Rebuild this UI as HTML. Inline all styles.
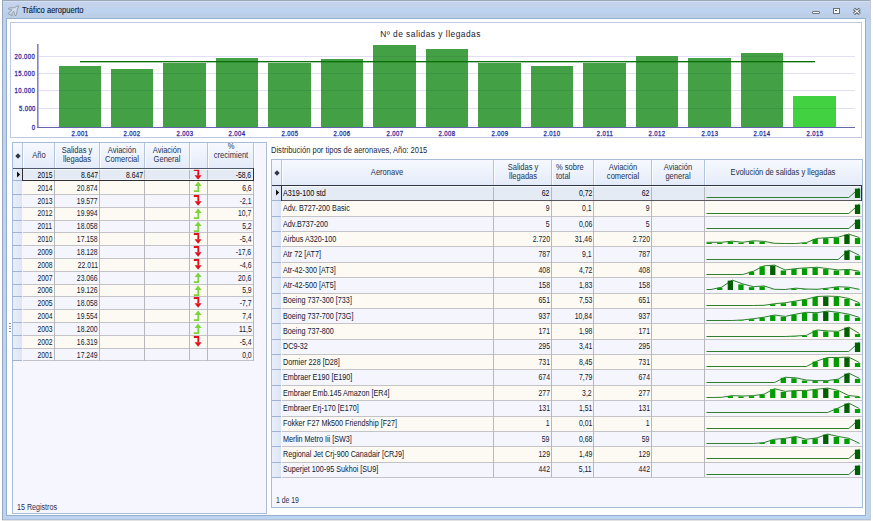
<!DOCTYPE html><html><head><meta charset="utf-8"><style>
*{margin:0;padding:0}
html,body{width:873px;height:521px;overflow:hidden;background:#fff;position:relative}
body{font-family:"Liberation Sans", sans-serif;}
.t{position:absolute;white-space:nowrap;line-height:1;font-family:"Liberation Sans", sans-serif;}
</style></head><body>
<div style="position:absolute;left:0px;top:0px;width:873px;height:521px;background:#fff;"></div>
<div style="position:absolute;left:2px;top:1px;width:868px;height:17px;background:linear-gradient(#cfe0f8 0px,#cfe0f8 1px,#c6d3ec 1px,#c5d2ec 6px,#bdd3ee 7px,#bcd2ee 12px,#bdcee7 13px,#bdcee7 17px);"></div>
<div style="position:absolute;left:3px;top:18px;width:3px;height:501px;background:#bcd4f0;"></div>
<div style="position:absolute;left:866px;top:18px;width:4px;height:501px;background:#bcd4f0;"></div>
<div style="position:absolute;left:3px;top:516px;width:867px;height:3px;background:#bcd4f0;"></div>
<div style="position:absolute;left:3px;top:519px;width:867px;height:1px;background:#b0c2da;"></div>
<div style="position:absolute;left:2px;top:0px;width:868px;height:1px;background:#9ea6b2;"></div>
<div style="position:absolute;left:2px;top:0px;width:1px;height:520px;background:#98a8bc;"></div>
<div style="position:absolute;left:870px;top:0px;width:1px;height:520px;background:#c8ccd2;"></div>
<div style="position:absolute;left:2px;top:520px;width:869px;height:1px;background:#e2e2e2;"></div>
<div style="position:absolute;left:6px;top:18px;width:860px;height:498px;background:#fff;box-sizing:border-box;border:1px solid #93aed0;"></div>
<div class="t" style="left:22.3px;transform-origin:0 0;top:6.18px;font-size:9px;color:#101830;font-weight:400;transform:scaleX(0.84);-webkit-text-stroke:0.12px #101830;">Tráfico aeropuerto</div>
<svg style="position:absolute;left:0;top:0" width="26" height="20" viewBox="0 0 26 20">
<path d="M18.9 5.9 L17.4 9.3 L16.2 15.4 L15.0 15.6 L13.9 11.4 L11.9 13.3 L12.1 15.7 L11.0 15.8 L10.2 14.3 L8.2 13.9 L8.3 13.0 L10.1 12.0 L12.1 10.0 L8.6 9.1 L8.6 8.0 L14.2 7.7 L16.9 6.1 Z" fill="#cfdcee" stroke="#90959b" stroke-width="0.85" stroke-linejoin="round"/>
</svg>
<div style="position:absolute;left:812px;top:11px;width:6px;height:1px;border:1px solid #6c7078;border-radius:1px;background:#fff"></div>
<div style="position:absolute;left:833px;top:8px;width:5px;height:4px;border:1px solid #6c7078;background:#fff;"></div>
<div style="position:absolute;left:835px;top:10px;width:2px;height:1px;background:#50545a"></div>
<svg style="position:absolute;left:852px;top:7px" width="10" height="9" viewBox="0 0 10 9">
<path d="M2 1.8 L7.8 6.8 M7.8 1.8 L2 6.8" stroke="#505458" stroke-width="2.9"/>
<path d="M2.3 2.1 L7.5 6.5 M7.5 2.1 L2.3 6.5" stroke="#fff" stroke-width="1.1"/>
</svg>
<div style="position:absolute;left:10px;top:22px;width:852px;height:116px;box-sizing:border-box;border:1px solid #c0c8e4;background:#fff;"></div>
<div class="t" style="left:130.5px;width:600px;text-align:center;transform-origin:50% 0;top:30.19px;font-size:8.4px;color:#161634;font-weight:400;transform:scaleX(1.0);letter-spacing:0.48px;">Nº de salidas y llegadas</div>
<div style="position:absolute;left:39px;top:108px;width:816px;height:1px;background:#e2def4;"></div>
<div style="position:absolute;left:39px;top:90px;width:816px;height:1px;background:#e2def4;"></div>
<div style="position:absolute;left:39px;top:73px;width:816px;height:1px;background:#e2def4;"></div>
<div style="position:absolute;left:39px;top:56px;width:816px;height:1px;background:#e2def4;"></div>
<div style="position:absolute;left:39px;top:125px;width:816px;height:1px;background:#f4f2fb;"></div>
<div class="t" style="right:837.4px;transform-origin:100% 0;top:123.57px;font-size:7px;color:#2a2a9c;font-weight:400;transform:scaleX(0.85);letter-spacing:0.45px;-webkit-text-stroke:0.28px #2a2a9c;">0</div>
<div class="t" style="right:837.4px;transform-origin:100% 0;top:105.27px;font-size:7px;color:#2a2a9c;font-weight:400;transform:scaleX(0.85);letter-spacing:0.45px;-webkit-text-stroke:0.28px #2a2a9c;">5.000</div>
<div class="t" style="right:837.4px;transform-origin:100% 0;top:87.27px;font-size:7px;color:#2a2a9c;font-weight:400;transform:scaleX(0.85);letter-spacing:0.45px;-webkit-text-stroke:0.28px #2a2a9c;">10.000</div>
<div class="t" style="right:837.4px;transform-origin:100% 0;top:70.17px;font-size:7px;color:#2a2a9c;font-weight:400;transform:scaleX(0.85);letter-spacing:0.45px;-webkit-text-stroke:0.28px #2a2a9c;">15.000</div>
<div class="t" style="right:837.4px;transform-origin:100% 0;top:53.07px;font-size:7px;color:#2a2a9c;font-weight:400;transform:scaleX(0.85);letter-spacing:0.45px;-webkit-text-stroke:0.28px #2a2a9c;">20.000</div>
<div style="position:absolute;left:58.50px;top:65.94px;width:42.3px;height:61.06px;background:#44a044;"></div>
<div class="t" style="left:-220.1px;width:600px;text-align:center;transform-origin:50% 0;top:129.97px;font-size:7px;color:#2a2a9c;font-weight:400;transform:scaleX(0.85);letter-spacing:0.45px;-webkit-text-stroke:0.28px #2a2a9c;">2.001</div>
<div style="position:absolute;left:110.99px;top:69.23px;width:42.3px;height:57.77px;background:#44a044;"></div>
<div class="t" style="left:-167.60999999999999px;width:600px;text-align:center;transform-origin:50% 0;top:129.97px;font-size:7px;color:#2a2a9c;font-weight:400;transform:scaleX(0.85);letter-spacing:0.45px;-webkit-text-stroke:0.28px #2a2a9c;">2.002</div>
<div style="position:absolute;left:163.48px;top:62.57px;width:42.3px;height:64.43px;background:#44a044;"></div>
<div class="t" style="left:-115.11999999999998px;width:600px;text-align:center;transform-origin:50% 0;top:129.97px;font-size:7px;color:#2a2a9c;font-weight:400;transform:scaleX(0.85);letter-spacing:0.45px;-webkit-text-stroke:0.28px #2a2a9c;">2.003</div>
<div style="position:absolute;left:215.97px;top:57.78px;width:42.3px;height:69.22px;background:#44a044;"></div>
<div class="t" style="left:-62.629999999999995px;width:600px;text-align:center;transform-origin:50% 0;top:129.97px;font-size:7px;color:#2a2a9c;font-weight:400;transform:scaleX(0.85);letter-spacing:0.45px;-webkit-text-stroke:0.28px #2a2a9c;">2.004</div>
<div style="position:absolute;left:268.46px;top:63.07px;width:42.3px;height:63.93px;background:#44a044;"></div>
<div class="t" style="left:-10.139999999999986px;width:600px;text-align:center;transform-origin:50% 0;top:129.97px;font-size:7px;color:#2a2a9c;font-weight:400;transform:scaleX(0.85);letter-spacing:0.45px;-webkit-text-stroke:0.28px #2a2a9c;">2.005</div>
<div style="position:absolute;left:320.95px;top:59.29px;width:42.3px;height:67.71px;background:#44a044;"></div>
<div class="t" style="left:42.349999999999966px;width:600px;text-align:center;transform-origin:50% 0;top:129.97px;font-size:7px;color:#2a2a9c;font-weight:400;transform:scaleX(0.85);letter-spacing:0.45px;-webkit-text-stroke:0.28px #2a2a9c;">2.006</div>
<div style="position:absolute;left:373.44px;top:45.35px;width:42.3px;height:81.65px;background:#44a044;"></div>
<div class="t" style="left:94.83999999999997px;width:600px;text-align:center;transform-origin:50% 0;top:129.97px;font-size:7px;color:#2a2a9c;font-weight:400;transform:scaleX(0.85);letter-spacing:0.45px;-webkit-text-stroke:0.28px #2a2a9c;">2.007</div>
<div style="position:absolute;left:425.93px;top:49.08px;width:42.3px;height:77.92px;background:#44a044;"></div>
<div class="t" style="left:147.32999999999998px;width:600px;text-align:center;transform-origin:50% 0;top:129.97px;font-size:7px;color:#2a2a9c;font-weight:400;transform:scaleX(0.85);letter-spacing:0.45px;-webkit-text-stroke:0.28px #2a2a9c;">2.008</div>
<div style="position:absolute;left:478.42px;top:62.83px;width:42.3px;height:64.17px;background:#44a044;"></div>
<div class="t" style="left:199.82px;width:600px;text-align:center;transform-origin:50% 0;top:129.97px;font-size:7px;color:#2a2a9c;font-weight:400;transform:scaleX(0.85);letter-spacing:0.45px;-webkit-text-stroke:0.28px #2a2a9c;">2.009</div>
<div style="position:absolute;left:530.91px;top:66.26px;width:42.3px;height:60.74px;background:#44a044;"></div>
<div class="t" style="left:252.31000000000006px;width:600px;text-align:center;transform-origin:50% 0;top:129.97px;font-size:7px;color:#2a2a9c;font-weight:400;transform:scaleX(0.85);letter-spacing:0.45px;-webkit-text-stroke:0.28px #2a2a9c;">2.010</div>
<div style="position:absolute;left:583.40px;top:63.07px;width:42.3px;height:63.93px;background:#44a044;"></div>
<div class="t" style="left:304.79999999999995px;width:600px;text-align:center;transform-origin:50% 0;top:129.97px;font-size:7px;color:#2a2a9c;font-weight:400;transform:scaleX(0.85);letter-spacing:0.45px;-webkit-text-stroke:0.28px #2a2a9c;">2.011</div>
<div style="position:absolute;left:635.89px;top:56.22px;width:42.3px;height:70.78px;background:#44a044;"></div>
<div class="t" style="left:357.28999999999996px;width:600px;text-align:center;transform-origin:50% 0;top:129.97px;font-size:7px;color:#2a2a9c;font-weight:400;transform:scaleX(0.85);letter-spacing:0.45px;-webkit-text-stroke:0.28px #2a2a9c;">2.012</div>
<div style="position:absolute;left:688.38px;top:57.70px;width:42.3px;height:69.30px;background:#44a044;"></div>
<div class="t" style="left:409.78px;width:600px;text-align:center;transform-origin:50% 0;top:129.97px;font-size:7px;color:#2a2a9c;font-weight:400;transform:scaleX(0.85);letter-spacing:0.45px;-webkit-text-stroke:0.28px #2a2a9c;">2.013</div>
<div style="position:absolute;left:740.87px;top:53.11px;width:42.3px;height:73.89px;background:#44a044;"></div>
<div class="t" style="left:462.27px;width:600px;text-align:center;transform-origin:50% 0;top:129.97px;font-size:7px;color:#2a2a9c;font-weight:400;transform:scaleX(0.85);letter-spacing:0.45px;-webkit-text-stroke:0.28px #2a2a9c;">2.014</div>
<div style="position:absolute;left:793.36px;top:96.39px;width:42.3px;height:30.61px;background:#41d141;"></div>
<div class="t" style="left:514.76px;width:600px;text-align:center;transform-origin:50% 0;top:129.97px;font-size:7px;color:#2a2a9c;font-weight:400;transform:scaleX(0.85);letter-spacing:0.45px;-webkit-text-stroke:0.28px #2a2a9c;">2.015</div>
<div style="position:absolute;left:58.5px;top:108px;width:42.3px;height:1px;background:rgba(0,30,40,0.09);"></div>
<div style="position:absolute;left:58.5px;top:90px;width:42.3px;height:1px;background:rgba(0,30,40,0.09);"></div>
<div style="position:absolute;left:58.5px;top:73px;width:42.3px;height:1px;background:rgba(0,30,40,0.09);"></div>
<div style="position:absolute;left:110.99px;top:108px;width:42.3px;height:1px;background:rgba(0,30,40,0.09);"></div>
<div style="position:absolute;left:110.99px;top:90px;width:42.3px;height:1px;background:rgba(0,30,40,0.09);"></div>
<div style="position:absolute;left:110.99px;top:73px;width:42.3px;height:1px;background:rgba(0,30,40,0.09);"></div>
<div style="position:absolute;left:163.48px;top:108px;width:42.3px;height:1px;background:rgba(0,30,40,0.09);"></div>
<div style="position:absolute;left:163.48px;top:90px;width:42.3px;height:1px;background:rgba(0,30,40,0.09);"></div>
<div style="position:absolute;left:163.48px;top:73px;width:42.3px;height:1px;background:rgba(0,30,40,0.09);"></div>
<div style="position:absolute;left:215.97px;top:108px;width:42.3px;height:1px;background:rgba(0,30,40,0.09);"></div>
<div style="position:absolute;left:215.97px;top:90px;width:42.3px;height:1px;background:rgba(0,30,40,0.09);"></div>
<div style="position:absolute;left:215.97px;top:73px;width:42.3px;height:1px;background:rgba(0,30,40,0.09);"></div>
<div style="position:absolute;left:268.46px;top:108px;width:42.3px;height:1px;background:rgba(0,30,40,0.09);"></div>
<div style="position:absolute;left:268.46px;top:90px;width:42.3px;height:1px;background:rgba(0,30,40,0.09);"></div>
<div style="position:absolute;left:268.46px;top:73px;width:42.3px;height:1px;background:rgba(0,30,40,0.09);"></div>
<div style="position:absolute;left:320.95px;top:108px;width:42.3px;height:1px;background:rgba(0,30,40,0.09);"></div>
<div style="position:absolute;left:320.95px;top:90px;width:42.3px;height:1px;background:rgba(0,30,40,0.09);"></div>
<div style="position:absolute;left:320.95px;top:73px;width:42.3px;height:1px;background:rgba(0,30,40,0.09);"></div>
<div style="position:absolute;left:373.44px;top:108px;width:42.3px;height:1px;background:rgba(0,30,40,0.09);"></div>
<div style="position:absolute;left:373.44px;top:90px;width:42.3px;height:1px;background:rgba(0,30,40,0.09);"></div>
<div style="position:absolute;left:373.44px;top:73px;width:42.3px;height:1px;background:rgba(0,30,40,0.09);"></div>
<div style="position:absolute;left:373.44px;top:56px;width:42.3px;height:1px;background:rgba(0,30,40,0.09);"></div>
<div style="position:absolute;left:425.93px;top:108px;width:42.3px;height:1px;background:rgba(0,30,40,0.09);"></div>
<div style="position:absolute;left:425.93px;top:90px;width:42.3px;height:1px;background:rgba(0,30,40,0.09);"></div>
<div style="position:absolute;left:425.93px;top:73px;width:42.3px;height:1px;background:rgba(0,30,40,0.09);"></div>
<div style="position:absolute;left:425.93px;top:56px;width:42.3px;height:1px;background:rgba(0,30,40,0.09);"></div>
<div style="position:absolute;left:478.42px;top:108px;width:42.3px;height:1px;background:rgba(0,30,40,0.09);"></div>
<div style="position:absolute;left:478.42px;top:90px;width:42.3px;height:1px;background:rgba(0,30,40,0.09);"></div>
<div style="position:absolute;left:478.42px;top:73px;width:42.3px;height:1px;background:rgba(0,30,40,0.09);"></div>
<div style="position:absolute;left:530.91px;top:108px;width:42.3px;height:1px;background:rgba(0,30,40,0.09);"></div>
<div style="position:absolute;left:530.91px;top:90px;width:42.3px;height:1px;background:rgba(0,30,40,0.09);"></div>
<div style="position:absolute;left:530.91px;top:73px;width:42.3px;height:1px;background:rgba(0,30,40,0.09);"></div>
<div style="position:absolute;left:583.4px;top:108px;width:42.3px;height:1px;background:rgba(0,30,40,0.09);"></div>
<div style="position:absolute;left:583.4px;top:90px;width:42.3px;height:1px;background:rgba(0,30,40,0.09);"></div>
<div style="position:absolute;left:583.4px;top:73px;width:42.3px;height:1px;background:rgba(0,30,40,0.09);"></div>
<div style="position:absolute;left:635.89px;top:108px;width:42.3px;height:1px;background:rgba(0,30,40,0.09);"></div>
<div style="position:absolute;left:635.89px;top:90px;width:42.3px;height:1px;background:rgba(0,30,40,0.09);"></div>
<div style="position:absolute;left:635.89px;top:73px;width:42.3px;height:1px;background:rgba(0,30,40,0.09);"></div>
<div style="position:absolute;left:688.38px;top:108px;width:42.3px;height:1px;background:rgba(0,30,40,0.09);"></div>
<div style="position:absolute;left:688.38px;top:90px;width:42.3px;height:1px;background:rgba(0,30,40,0.09);"></div>
<div style="position:absolute;left:688.38px;top:73px;width:42.3px;height:1px;background:rgba(0,30,40,0.09);"></div>
<div style="position:absolute;left:740.87px;top:108px;width:42.3px;height:1px;background:rgba(0,30,40,0.09);"></div>
<div style="position:absolute;left:740.87px;top:90px;width:42.3px;height:1px;background:rgba(0,30,40,0.09);"></div>
<div style="position:absolute;left:740.87px;top:73px;width:42.3px;height:1px;background:rgba(0,30,40,0.09);"></div>
<div style="position:absolute;left:740.87px;top:56px;width:42.3px;height:1px;background:rgba(0,30,40,0.09);"></div>
<div style="position:absolute;left:793.36px;top:108px;width:42.3px;height:1px;background:rgba(0,30,40,0.09);"></div>
<div style="position:absolute;left:79.5px;top:61px;width:735px;height:1px;background:#0a700a;"></div>
<div style="position:absolute;left:79.5px;top:62px;width:735px;height:1px;background:rgba(10,112,10,0.35);"></div>
<div style="position:absolute;left:37px;top:44px;width:1px;height:84px;background:#8484c4;"></div>
<div style="position:absolute;left:38px;top:44px;width:1px;height:84px;background:#b4b4dc;"></div>
<div style="position:absolute;left:37px;top:127px;width:818px;height:1px;background:#6464b0;"></div>
<div style="position:absolute;left:12px;top:142px;width:255px;height:372px;box-sizing:border-box;border:1px solid #a8bcd8;background:#f5f6fe;"></div>
<div style="position:absolute;left:13px;top:143px;width:241px;height:25px;background:linear-gradient(#f6f9fe,#e4ebf9);"></div>
<div style="position:absolute;left:22px;top:143px;width:1px;height:25px;background:#b4c4dc;"></div>
<div style="position:absolute;left:23px;top:143px;width:1px;height:25px;background:#fbfcff;"></div>
<div style="position:absolute;left:54px;top:143px;width:1px;height:25px;background:#b4c4dc;"></div>
<div style="position:absolute;left:55px;top:143px;width:1px;height:25px;background:#fbfcff;"></div>
<div style="position:absolute;left:99px;top:143px;width:1px;height:25px;background:#b4c4dc;"></div>
<div style="position:absolute;left:100px;top:143px;width:1px;height:25px;background:#fbfcff;"></div>
<div style="position:absolute;left:144px;top:143px;width:1px;height:25px;background:#b4c4dc;"></div>
<div style="position:absolute;left:145px;top:143px;width:1px;height:25px;background:#fbfcff;"></div>
<div style="position:absolute;left:189px;top:143px;width:1px;height:25px;background:#b4c4dc;"></div>
<div style="position:absolute;left:190px;top:143px;width:1px;height:25px;background:#fbfcff;"></div>
<div style="position:absolute;left:207px;top:143px;width:1px;height:25px;background:#b4c4dc;"></div>
<div style="position:absolute;left:208px;top:143px;width:1px;height:25px;background:#fbfcff;"></div>
<div style="position:absolute;left:253px;top:143px;width:1px;height:25px;background:#b4c4dc;"></div>
<div style="position:absolute;left:254px;top:143px;width:1px;height:25px;background:#fbfcff;"></div>
<svg width="6" height="6" style="position:absolute;left:14.5px;top:152.8px"><path d="M3 0.3 L5.7 3 L3 5.7 L0.3 3 Z" fill="#303848"/></svg>
<div class="t" style="left:-261.5px;width:600px;text-align:center;transform-origin:50% 0;top:151.19px;font-size:8.4px;color:#24304e;font-weight:400;transform:scaleX(0.9);">Año</div>
<div class="t" style="left:-223.0px;width:600px;text-align:center;transform-origin:50% 0;top:146.09px;font-size:8.4px;color:#24304e;font-weight:400;transform:scaleX(0.9);">Salidas y</div>
<div class="t" style="left:-223.0px;width:600px;text-align:center;transform-origin:50% 0;top:155.29px;font-size:8.4px;color:#24304e;font-weight:400;transform:scaleX(0.9);">llegadas</div>
<div class="t" style="left:-178.0px;width:600px;text-align:center;transform-origin:50% 0;top:146.09px;font-size:8.4px;color:#24304e;font-weight:400;transform:scaleX(0.9);">Aviación</div>
<div class="t" style="left:-178.0px;width:600px;text-align:center;transform-origin:50% 0;top:155.29px;font-size:8.4px;color:#24304e;font-weight:400;transform:scaleX(0.9);">Comercial</div>
<div class="t" style="left:-132.85px;width:600px;text-align:center;transform-origin:50% 0;top:146.09px;font-size:8.4px;color:#24304e;font-weight:400;transform:scaleX(0.9);">Aviación</div>
<div class="t" style="left:-132.85px;width:600px;text-align:center;transform-origin:50% 0;top:155.29px;font-size:8.4px;color:#24304e;font-weight:400;transform:scaleX(0.9);">General</div>
<div class="t" style="left:-69.5px;width:600px;text-align:center;transform-origin:50% 0;top:141.69px;font-size:8.4px;color:#24304e;font-weight:400;transform:scaleX(0.9);">%</div>
<div class="t" style="left:-69.5px;width:600px;text-align:center;transform-origin:50% 0;top:151.39px;font-size:8.4px;color:#24304e;font-weight:400;transform:scaleX(0.9);">crecimient</div>
<div style="position:absolute;left:23px;top:168px;width:231px;height:12px;background:#e4ebf4;"></div>
<div style="position:absolute;left:13px;top:168px;width:9px;height:12px;background:linear-gradient(90deg,#e9eefa,#dce5f5);"></div>
<div class="t" style="right:820.5px;transform-origin:100% 0;top:170.89px;font-size:8.4px;color:#06060c;font-weight:400;transform:scaleX(0.81);">2015</div>
<div class="t" style="right:775.5px;transform-origin:100% 0;top:170.89px;font-size:8.4px;color:#06060c;font-weight:400;transform:scaleX(0.81);">8.647</div>
<div class="t" style="right:730.5px;transform-origin:100% 0;top:170.89px;font-size:8.4px;color:#06060c;font-weight:400;transform:scaleX(0.81);">8.647</div>
<div class="t" style="right:621.5px;transform-origin:100% 0;top:170.89px;font-size:8.4px;color:#06060c;font-weight:400;transform:scaleX(0.81);">-58,6</div>
<svg width="9" height="12" viewBox="0 0 9 12" style="position:absolute;left:192.5px;top:168.5px"><path d="M0.8 1 H5.3 V6.5" fill="none" stroke="#e0101c" stroke-width="1.8"/><path d="M1.6 6.3 H8.6 L5.1 10.8 Z" fill="#e0101c"/></svg>
<div style="position:absolute;left:23px;top:180px;width:231px;height:14px;background:#fdfaf3;"></div>
<div style="position:absolute;left:13px;top:180px;width:9px;height:14px;background:linear-gradient(90deg,#e9eefa,#dce5f5);"></div>
<div class="t" style="right:820.5px;transform-origin:100% 0;top:183.73px;font-size:8.4px;color:#0e1834;font-weight:400;transform:scaleX(0.81);">2014</div>
<div class="t" style="right:775.5px;transform-origin:100% 0;top:183.73px;font-size:8.4px;color:#0e1834;font-weight:400;transform:scaleX(0.81);">20.874</div>
<div class="t" style="right:621.5px;transform-origin:100% 0;top:183.73px;font-size:8.4px;color:#0e1834;font-weight:400;transform:scaleX(0.81);">6,6</div>
<svg width="9" height="12" viewBox="0 0 9 12" style="position:absolute;left:192.5px;top:180.5px"><path d="M0.8 10.2 H5.3 V4.5" fill="none" stroke="#7cd43c" stroke-width="1.8"/><path d="M1.6 4.9 H8.6 L5.1 0.6 Z" fill="#7cd43c"/></svg>
<div style="position:absolute;left:23px;top:194px;width:231px;height:13px;background:#f4f5fd;"></div>
<div style="position:absolute;left:13px;top:194px;width:9px;height:13px;background:linear-gradient(90deg,#e9eefa,#dce5f5);"></div>
<div class="t" style="right:820.5px;transform-origin:100% 0;top:196.57px;font-size:8.4px;color:#0e1834;font-weight:400;transform:scaleX(0.81);">2013</div>
<div class="t" style="right:775.5px;transform-origin:100% 0;top:196.57px;font-size:8.4px;color:#0e1834;font-weight:400;transform:scaleX(0.81);">19.577</div>
<div class="t" style="right:621.5px;transform-origin:100% 0;top:196.57px;font-size:8.4px;color:#0e1834;font-weight:400;transform:scaleX(0.81);">-2,1</div>
<svg width="9" height="12" viewBox="0 0 9 12" style="position:absolute;left:192.5px;top:194.5px"><path d="M0.8 1 H5.3 V6.5" fill="none" stroke="#e0101c" stroke-width="1.8"/><path d="M1.6 6.3 H8.6 L5.1 10.8 Z" fill="#e0101c"/></svg>
<div style="position:absolute;left:23px;top:207px;width:231px;height:13px;background:#fdfaf3;"></div>
<div style="position:absolute;left:13px;top:207px;width:9px;height:13px;background:linear-gradient(90deg,#e9eefa,#dce5f5);"></div>
<div class="t" style="right:820.5px;transform-origin:100% 0;top:209.41px;font-size:8.4px;color:#0e1834;font-weight:400;transform:scaleX(0.81);">2012</div>
<div class="t" style="right:775.5px;transform-origin:100% 0;top:209.41px;font-size:8.4px;color:#0e1834;font-weight:400;transform:scaleX(0.81);">19.994</div>
<div class="t" style="right:621.5px;transform-origin:100% 0;top:209.41px;font-size:8.4px;color:#0e1834;font-weight:400;transform:scaleX(0.81);">10,7</div>
<svg width="9" height="12" viewBox="0 0 9 12" style="position:absolute;left:192.5px;top:207.5px"><path d="M0.8 10.2 H5.3 V4.5" fill="none" stroke="#7cd43c" stroke-width="1.8"/><path d="M1.6 4.9 H8.6 L5.1 0.6 Z" fill="#7cd43c"/></svg>
<div style="position:absolute;left:23px;top:220px;width:231px;height:12px;background:#f4f5fd;"></div>
<div style="position:absolute;left:13px;top:220px;width:9px;height:12px;background:linear-gradient(90deg,#e9eefa,#dce5f5);"></div>
<div class="t" style="right:820.5px;transform-origin:100% 0;top:222.25px;font-size:8.4px;color:#0e1834;font-weight:400;transform:scaleX(0.81);">2011</div>
<div class="t" style="right:775.5px;transform-origin:100% 0;top:222.25px;font-size:8.4px;color:#0e1834;font-weight:400;transform:scaleX(0.81);">18.058</div>
<div class="t" style="right:621.5px;transform-origin:100% 0;top:222.25px;font-size:8.4px;color:#0e1834;font-weight:400;transform:scaleX(0.81);">5,2</div>
<svg width="9" height="12" viewBox="0 0 9 12" style="position:absolute;left:192.5px;top:220.5px"><path d="M0.8 10.2 H5.3 V4.5" fill="none" stroke="#7cd43c" stroke-width="1.8"/><path d="M1.6 4.9 H8.6 L5.1 0.6 Z" fill="#7cd43c"/></svg>
<div style="position:absolute;left:23px;top:232px;width:231px;height:13px;background:#fdfaf3;"></div>
<div style="position:absolute;left:13px;top:232px;width:9px;height:13px;background:linear-gradient(90deg,#e9eefa,#dce5f5);"></div>
<div class="t" style="right:820.5px;transform-origin:100% 0;top:235.09px;font-size:8.4px;color:#0e1834;font-weight:400;transform:scaleX(0.81);">2010</div>
<div class="t" style="right:775.5px;transform-origin:100% 0;top:235.09px;font-size:8.4px;color:#0e1834;font-weight:400;transform:scaleX(0.81);">17.158</div>
<div class="t" style="right:621.5px;transform-origin:100% 0;top:235.09px;font-size:8.4px;color:#0e1834;font-weight:400;transform:scaleX(0.81);">-5,4</div>
<svg width="9" height="12" viewBox="0 0 9 12" style="position:absolute;left:192.5px;top:232.5px"><path d="M0.8 1 H5.3 V6.5" fill="none" stroke="#e0101c" stroke-width="1.8"/><path d="M1.6 6.3 H8.6 L5.1 10.8 Z" fill="#e0101c"/></svg>
<div style="position:absolute;left:23px;top:245px;width:231px;height:13px;background:#f4f5fd;"></div>
<div style="position:absolute;left:13px;top:245px;width:9px;height:13px;background:linear-gradient(90deg,#e9eefa,#dce5f5);"></div>
<div class="t" style="right:820.5px;transform-origin:100% 0;top:247.93px;font-size:8.4px;color:#0e1834;font-weight:400;transform:scaleX(0.81);">2009</div>
<div class="t" style="right:775.5px;transform-origin:100% 0;top:247.93px;font-size:8.4px;color:#0e1834;font-weight:400;transform:scaleX(0.81);">18.128</div>
<div class="t" style="right:621.5px;transform-origin:100% 0;top:247.93px;font-size:8.4px;color:#0e1834;font-weight:400;transform:scaleX(0.81);">-17,6</div>
<svg width="9" height="12" viewBox="0 0 9 12" style="position:absolute;left:192.5px;top:245.5px"><path d="M0.8 1 H5.3 V6.5" fill="none" stroke="#e0101c" stroke-width="1.8"/><path d="M1.6 6.3 H8.6 L5.1 10.8 Z" fill="#e0101c"/></svg>
<div style="position:absolute;left:23px;top:258px;width:231px;height:13px;background:#fdfaf3;"></div>
<div style="position:absolute;left:13px;top:258px;width:9px;height:13px;background:linear-gradient(90deg,#e9eefa,#dce5f5);"></div>
<div class="t" style="right:820.5px;transform-origin:100% 0;top:260.77px;font-size:8.4px;color:#0e1834;font-weight:400;transform:scaleX(0.81);">2008</div>
<div class="t" style="right:775.5px;transform-origin:100% 0;top:260.77px;font-size:8.4px;color:#0e1834;font-weight:400;transform:scaleX(0.81);">22.011</div>
<div class="t" style="right:621.5px;transform-origin:100% 0;top:260.77px;font-size:8.4px;color:#0e1834;font-weight:400;transform:scaleX(0.81);">-4,6</div>
<svg width="9" height="12" viewBox="0 0 9 12" style="position:absolute;left:192.5px;top:258.5px"><path d="M0.8 1 H5.3 V6.5" fill="none" stroke="#e0101c" stroke-width="1.8"/><path d="M1.6 6.3 H8.6 L5.1 10.8 Z" fill="#e0101c"/></svg>
<div style="position:absolute;left:23px;top:271px;width:231px;height:13px;background:#f4f5fd;"></div>
<div style="position:absolute;left:13px;top:271px;width:9px;height:13px;background:linear-gradient(90deg,#e9eefa,#dce5f5);"></div>
<div class="t" style="right:820.5px;transform-origin:100% 0;top:273.61px;font-size:8.4px;color:#0e1834;font-weight:400;transform:scaleX(0.81);">2007</div>
<div class="t" style="right:775.5px;transform-origin:100% 0;top:273.61px;font-size:8.4px;color:#0e1834;font-weight:400;transform:scaleX(0.81);">23.066</div>
<div class="t" style="right:621.5px;transform-origin:100% 0;top:273.61px;font-size:8.4px;color:#0e1834;font-weight:400;transform:scaleX(0.81);">20,6</div>
<svg width="9" height="12" viewBox="0 0 9 12" style="position:absolute;left:192.5px;top:271.5px"><path d="M0.8 10.2 H5.3 V4.5" fill="none" stroke="#7cd43c" stroke-width="1.8"/><path d="M1.6 4.9 H8.6 L5.1 0.6 Z" fill="#7cd43c"/></svg>
<div style="position:absolute;left:23px;top:284px;width:231px;height:12px;background:#fdfaf3;"></div>
<div style="position:absolute;left:13px;top:284px;width:9px;height:12px;background:linear-gradient(90deg,#e9eefa,#dce5f5);"></div>
<div class="t" style="right:820.5px;transform-origin:100% 0;top:286.45px;font-size:8.4px;color:#0e1834;font-weight:400;transform:scaleX(0.81);">2006</div>
<div class="t" style="right:775.5px;transform-origin:100% 0;top:286.45px;font-size:8.4px;color:#0e1834;font-weight:400;transform:scaleX(0.81);">19.126</div>
<div class="t" style="right:621.5px;transform-origin:100% 0;top:286.45px;font-size:8.4px;color:#0e1834;font-weight:400;transform:scaleX(0.81);">5,9</div>
<svg width="9" height="12" viewBox="0 0 9 12" style="position:absolute;left:192.5px;top:284.5px"><path d="M0.8 10.2 H5.3 V4.5" fill="none" stroke="#7cd43c" stroke-width="1.8"/><path d="M1.6 4.9 H8.6 L5.1 0.6 Z" fill="#7cd43c"/></svg>
<div style="position:absolute;left:23px;top:296px;width:231px;height:13px;background:#f4f5fd;"></div>
<div style="position:absolute;left:13px;top:296px;width:9px;height:13px;background:linear-gradient(90deg,#e9eefa,#dce5f5);"></div>
<div class="t" style="right:820.5px;transform-origin:100% 0;top:299.29px;font-size:8.4px;color:#0e1834;font-weight:400;transform:scaleX(0.81);">2005</div>
<div class="t" style="right:775.5px;transform-origin:100% 0;top:299.29px;font-size:8.4px;color:#0e1834;font-weight:400;transform:scaleX(0.81);">18.058</div>
<div class="t" style="right:621.5px;transform-origin:100% 0;top:299.29px;font-size:8.4px;color:#0e1834;font-weight:400;transform:scaleX(0.81);">-7,7</div>
<svg width="9" height="12" viewBox="0 0 9 12" style="position:absolute;left:192.5px;top:296.5px"><path d="M0.8 1 H5.3 V6.5" fill="none" stroke="#e0101c" stroke-width="1.8"/><path d="M1.6 6.3 H8.6 L5.1 10.8 Z" fill="#e0101c"/></svg>
<div style="position:absolute;left:23px;top:309px;width:231px;height:13px;background:#fdfaf3;"></div>
<div style="position:absolute;left:13px;top:309px;width:9px;height:13px;background:linear-gradient(90deg,#e9eefa,#dce5f5);"></div>
<div class="t" style="right:820.5px;transform-origin:100% 0;top:312.13px;font-size:8.4px;color:#0e1834;font-weight:400;transform:scaleX(0.81);">2004</div>
<div class="t" style="right:775.5px;transform-origin:100% 0;top:312.13px;font-size:8.4px;color:#0e1834;font-weight:400;transform:scaleX(0.81);">19.554</div>
<div class="t" style="right:621.5px;transform-origin:100% 0;top:312.13px;font-size:8.4px;color:#0e1834;font-weight:400;transform:scaleX(0.81);">7,4</div>
<svg width="9" height="12" viewBox="0 0 9 12" style="position:absolute;left:192.5px;top:309.5px"><path d="M0.8 10.2 H5.3 V4.5" fill="none" stroke="#7cd43c" stroke-width="1.8"/><path d="M1.6 4.9 H8.6 L5.1 0.6 Z" fill="#7cd43c"/></svg>
<div style="position:absolute;left:23px;top:322px;width:231px;height:13px;background:#f4f5fd;"></div>
<div style="position:absolute;left:13px;top:322px;width:9px;height:13px;background:linear-gradient(90deg,#e9eefa,#dce5f5);"></div>
<div class="t" style="right:820.5px;transform-origin:100% 0;top:324.97px;font-size:8.4px;color:#0e1834;font-weight:400;transform:scaleX(0.81);">2003</div>
<div class="t" style="right:775.5px;transform-origin:100% 0;top:324.97px;font-size:8.4px;color:#0e1834;font-weight:400;transform:scaleX(0.81);">18.200</div>
<div class="t" style="right:621.5px;transform-origin:100% 0;top:324.97px;font-size:8.4px;color:#0e1834;font-weight:400;transform:scaleX(0.81);">11,5</div>
<svg width="9" height="12" viewBox="0 0 9 12" style="position:absolute;left:192.5px;top:322.5px"><path d="M0.8 10.2 H5.3 V4.5" fill="none" stroke="#7cd43c" stroke-width="1.8"/><path d="M1.6 4.9 H8.6 L5.1 0.6 Z" fill="#7cd43c"/></svg>
<div style="position:absolute;left:23px;top:335px;width:231px;height:13px;background:#fdfaf3;"></div>
<div style="position:absolute;left:13px;top:335px;width:9px;height:13px;background:linear-gradient(90deg,#e9eefa,#dce5f5);"></div>
<div class="t" style="right:820.5px;transform-origin:100% 0;top:337.81px;font-size:8.4px;color:#0e1834;font-weight:400;transform:scaleX(0.81);">2002</div>
<div class="t" style="right:775.5px;transform-origin:100% 0;top:337.81px;font-size:8.4px;color:#0e1834;font-weight:400;transform:scaleX(0.81);">16.319</div>
<div class="t" style="right:621.5px;transform-origin:100% 0;top:337.81px;font-size:8.4px;color:#0e1834;font-weight:400;transform:scaleX(0.81);">-5,4</div>
<svg width="9" height="12" viewBox="0 0 9 12" style="position:absolute;left:192.5px;top:335.5px"><path d="M0.8 1 H5.3 V6.5" fill="none" stroke="#e0101c" stroke-width="1.8"/><path d="M1.6 6.3 H8.6 L5.1 10.8 Z" fill="#e0101c"/></svg>
<div style="position:absolute;left:23px;top:348px;width:231px;height:12px;background:#f4f5fd;"></div>
<div style="position:absolute;left:13px;top:348px;width:9px;height:12px;background:linear-gradient(90deg,#e9eefa,#dce5f5);"></div>
<div class="t" style="right:820.5px;transform-origin:100% 0;top:350.65px;font-size:8.4px;color:#0e1834;font-weight:400;transform:scaleX(0.81);">2001</div>
<div class="t" style="right:775.5px;transform-origin:100% 0;top:350.65px;font-size:8.4px;color:#0e1834;font-weight:400;transform:scaleX(0.81);">17.249</div>
<div class="t" style="right:621.5px;transform-origin:100% 0;top:350.65px;font-size:8.4px;color:#0e1834;font-weight:400;transform:scaleX(0.81);">0,0</div>
<div style="position:absolute;left:13px;top:180px;width:9px;height:1px;background:#9fb4d4;"></div>
<div style="position:absolute;left:23px;top:180px;width:231px;height:1px;background:#c4c4c8;"></div>
<div style="position:absolute;left:13px;top:194px;width:9px;height:1px;background:#9fb4d4;"></div>
<div style="position:absolute;left:23px;top:194px;width:231px;height:1px;background:#c4c4c8;"></div>
<div style="position:absolute;left:13px;top:207px;width:9px;height:1px;background:#9fb4d4;"></div>
<div style="position:absolute;left:23px;top:207px;width:231px;height:1px;background:#c4c4c8;"></div>
<div style="position:absolute;left:13px;top:220px;width:9px;height:1px;background:#9fb4d4;"></div>
<div style="position:absolute;left:23px;top:220px;width:231px;height:1px;background:#c4c4c8;"></div>
<div style="position:absolute;left:13px;top:232px;width:9px;height:1px;background:#9fb4d4;"></div>
<div style="position:absolute;left:23px;top:232px;width:231px;height:1px;background:#c4c4c8;"></div>
<div style="position:absolute;left:13px;top:245px;width:9px;height:1px;background:#9fb4d4;"></div>
<div style="position:absolute;left:23px;top:245px;width:231px;height:1px;background:#c4c4c8;"></div>
<div style="position:absolute;left:13px;top:258px;width:9px;height:1px;background:#9fb4d4;"></div>
<div style="position:absolute;left:23px;top:258px;width:231px;height:1px;background:#c4c4c8;"></div>
<div style="position:absolute;left:13px;top:271px;width:9px;height:1px;background:#9fb4d4;"></div>
<div style="position:absolute;left:23px;top:271px;width:231px;height:1px;background:#c4c4c8;"></div>
<div style="position:absolute;left:13px;top:284px;width:9px;height:1px;background:#9fb4d4;"></div>
<div style="position:absolute;left:23px;top:284px;width:231px;height:1px;background:#c4c4c8;"></div>
<div style="position:absolute;left:13px;top:296px;width:9px;height:1px;background:#9fb4d4;"></div>
<div style="position:absolute;left:23px;top:296px;width:231px;height:1px;background:#c4c4c8;"></div>
<div style="position:absolute;left:13px;top:309px;width:9px;height:1px;background:#9fb4d4;"></div>
<div style="position:absolute;left:23px;top:309px;width:231px;height:1px;background:#c4c4c8;"></div>
<div style="position:absolute;left:13px;top:322px;width:9px;height:1px;background:#9fb4d4;"></div>
<div style="position:absolute;left:23px;top:322px;width:231px;height:1px;background:#c4c4c8;"></div>
<div style="position:absolute;left:13px;top:335px;width:9px;height:1px;background:#9fb4d4;"></div>
<div style="position:absolute;left:23px;top:335px;width:231px;height:1px;background:#c4c4c8;"></div>
<div style="position:absolute;left:13px;top:348px;width:9px;height:1px;background:#9fb4d4;"></div>
<div style="position:absolute;left:23px;top:348px;width:231px;height:1px;background:#c4c4c8;"></div>
<div style="position:absolute;left:13px;top:360px;width:9px;height:1px;background:#9fb4d4;"></div>
<div style="position:absolute;left:23px;top:360px;width:231px;height:1px;background:#c4c4c8;"></div>
<div style="position:absolute;left:54px;top:168px;width:1px;height:193px;background:#b8b8bc;"></div>
<div style="position:absolute;left:99px;top:168px;width:1px;height:193px;background:#b8b8bc;"></div>
<div style="position:absolute;left:144px;top:168px;width:1px;height:193px;background:#b8b8bc;"></div>
<div style="position:absolute;left:189px;top:168px;width:1px;height:193px;background:#b8b8bc;"></div>
<div style="position:absolute;left:207px;top:168px;width:1px;height:193px;background:#b8b8bc;"></div>
<div style="position:absolute;left:253px;top:168px;width:1px;height:193px;background:#b8b8bc;"></div>
<div style="position:absolute;left:13px;top:168px;width:241px;height:1px;background:#4c586c;"></div>
<div style="position:absolute;left:22px;top:180px;width:232px;height:1px;background:#303034;"></div>
<div style="position:absolute;left:22px;top:168px;width:1px;height:13px;background:#303034;"></div>
<div style="position:absolute;left:253px;top:168px;width:1px;height:13px;background:#303034;"></div>
<div style="position:absolute;left:23px;top:169px;width:230px;height:1px;background:rgba(255,255,255,0.75);"></div>
<div style="position:absolute;left:23px;top:179px;width:230px;height:1px;background:rgba(255,255,255,0.45);"></div>
<svg width="6" height="7" style="position:absolute;left:15.5px;top:171px"><path d="M1 0.5 L4.2 3.5 L1 6.5 Z" fill="#111"/></svg>
<div class="t" style="left:17px;transform-origin:0 0;top:502.89px;font-size:8.4px;color:#2a3050;font-weight:400;transform:scaleX(0.85);">15 Registros</div>
<div style="position:absolute;left:8.5px;top:323px;width:2px;height:1.2px;background:#8494b4;"></div>
<div style="position:absolute;left:8.5px;top:325.5px;width:2px;height:1.2px;background:#8494b4;"></div>
<div style="position:absolute;left:8.5px;top:328px;width:2px;height:1.2px;background:#8494b4;"></div>
<div style="position:absolute;left:8.5px;top:330.5px;width:2px;height:1.2px;background:#8494b4;"></div>
<div class="t" style="left:270.8px;transform-origin:0 0;top:145.89px;font-size:8.4px;color:#202840;font-weight:400;transform:scaleX(0.9);">Distribución por tipos de aeronaves, Año: 2015</div>
<div style="position:absolute;left:271px;top:159px;width:592px;height:349px;box-sizing:border-box;border:1px solid #a8bcd8;background:#f5f6fe;"></div>
<div style="position:absolute;left:272px;top:160px;width:590px;height:25px;background:linear-gradient(#f6f9fe,#e4ebf9);"></div>
<div style="position:absolute;left:281px;top:160px;width:1px;height:25px;background:#b4c4dc;"></div>
<div style="position:absolute;left:282px;top:160px;width:1px;height:25px;background:#fbfcff;"></div>
<div style="position:absolute;left:493px;top:160px;width:1px;height:25px;background:#b4c4dc;"></div>
<div style="position:absolute;left:494px;top:160px;width:1px;height:25px;background:#fbfcff;"></div>
<div style="position:absolute;left:551px;top:160px;width:1px;height:25px;background:#b4c4dc;"></div>
<div style="position:absolute;left:552px;top:160px;width:1px;height:25px;background:#fbfcff;"></div>
<div style="position:absolute;left:593px;top:160px;width:1px;height:25px;background:#b4c4dc;"></div>
<div style="position:absolute;left:594px;top:160px;width:1px;height:25px;background:#fbfcff;"></div>
<div style="position:absolute;left:651px;top:160px;width:1px;height:25px;background:#b4c4dc;"></div>
<div style="position:absolute;left:652px;top:160px;width:1px;height:25px;background:#fbfcff;"></div>
<div style="position:absolute;left:704px;top:160px;width:1px;height:25px;background:#b4c4dc;"></div>
<div style="position:absolute;left:705px;top:160px;width:1px;height:25px;background:#fbfcff;"></div>
<svg width="6" height="6" style="position:absolute;left:273.5px;top:169.5px"><path d="M3 0.3 L5.7 3 L3 5.7 L0.3 3 Z" fill="#303848"/></svg>
<div class="t" style="left:87.25px;width:600px;text-align:center;transform-origin:50% 0;top:167.79px;font-size:8.4px;color:#24304e;font-weight:400;transform:scaleX(0.9);">Aeronave</div>
<div class="t" style="left:222.5px;width:600px;text-align:center;transform-origin:50% 0;top:162.89px;font-size:8.4px;color:#24304e;font-weight:400;transform:scaleX(0.9);">Salidas y</div>
<div class="t" style="left:222.5px;width:600px;text-align:center;transform-origin:50% 0;top:172.39px;font-size:8.4px;color:#24304e;font-weight:400;transform:scaleX(0.9);">llegadas</div>
<div class="t" style="left:556px;transform-origin:0 0;top:162.89px;font-size:8.4px;color:#24304e;font-weight:400;transform:scaleX(0.9);">% sobre</div>
<div class="t" style="left:556px;transform-origin:0 0;top:172.39px;font-size:8.4px;color:#24304e;font-weight:400;transform:scaleX(0.9);">total</div>
<div class="t" style="left:322.5px;width:600px;text-align:center;transform-origin:50% 0;top:162.89px;font-size:8.4px;color:#24304e;font-weight:400;transform:scaleX(0.9);">Aviación</div>
<div class="t" style="left:322.5px;width:600px;text-align:center;transform-origin:50% 0;top:172.39px;font-size:8.4px;color:#24304e;font-weight:400;transform:scaleX(0.9);">comercial</div>
<div class="t" style="left:378.0px;width:600px;text-align:center;transform-origin:50% 0;top:162.89px;font-size:8.4px;color:#24304e;font-weight:400;transform:scaleX(0.9);">Aviación</div>
<div class="t" style="left:378.0px;width:600px;text-align:center;transform-origin:50% 0;top:172.39px;font-size:8.4px;color:#24304e;font-weight:400;transform:scaleX(0.9);">general</div>
<div class="t" style="left:483.25px;width:600px;text-align:center;transform-origin:50% 0;top:167.79px;font-size:8.4px;color:#24304e;font-weight:400;transform:scaleX(0.9);">Evolución de salidas y llegadas</div>
<div style="position:absolute;left:282px;top:185px;width:580px;height:15px;background:#e4ebf4;"></div>
<div style="position:absolute;left:272px;top:185px;width:9px;height:15px;background:linear-gradient(90deg,#e9eefa,#dce5f5);"></div>
<div class="t" style="left:283px;transform-origin:0 0;top:188.79px;font-size:8.4px;color:#06060c;font-weight:400;transform:scaleX(0.86);">A319-100 std</div>
<div class="t" style="right:323.5px;transform-origin:100% 0;top:188.79px;font-size:8.4px;color:#06060c;font-weight:400;transform:scaleX(0.82);">62</div>
<div class="t" style="right:281px;transform-origin:100% 0;top:188.79px;font-size:8.4px;color:#06060c;font-weight:400;transform:scaleX(0.82);">0,72</div>
<div class="t" style="right:223.5px;transform-origin:100% 0;top:188.79px;font-size:8.4px;color:#06060c;font-weight:400;transform:scaleX(0.82);">62</div>
<svg style="position:absolute;left:704px;top:185px" width="158" height="17" viewBox="0 0 158 17"><path d="M2.50 12.50 L144.80 12.50 L155.40 3.10" fill="none" stroke="#2f7f2f" stroke-width="1"/><rect x="150.90" y="3.60" width="5.3" height="9.40" fill="#005f00"/></svg>
<div style="position:absolute;left:282px;top:200px;width:580px;height:16px;background:#fdfaf3;"></div>
<div style="position:absolute;left:272px;top:200px;width:9px;height:16px;background:linear-gradient(90deg,#e9eefa,#dce5f5);"></div>
<div class="t" style="left:283px;transform-origin:0 0;top:204.16px;font-size:8.4px;color:#0e1834;font-weight:400;transform:scaleX(0.86);">Adv. B727-200 Basic</div>
<div class="t" style="right:323.5px;transform-origin:100% 0;top:204.16px;font-size:8.4px;color:#0e1834;font-weight:400;transform:scaleX(0.82);">9</div>
<div class="t" style="right:281px;transform-origin:100% 0;top:204.16px;font-size:8.4px;color:#0e1834;font-weight:400;transform:scaleX(0.82);">0,1</div>
<div class="t" style="right:223.5px;transform-origin:100% 0;top:204.16px;font-size:8.4px;color:#0e1834;font-weight:400;transform:scaleX(0.82);">9</div>
<svg style="position:absolute;left:704px;top:200px" width="158" height="17" viewBox="0 0 158 17"><path d="M2.50 13.50 L144.80 13.50 L155.40 4.10" fill="none" stroke="#2f7f2f" stroke-width="1"/><rect x="150.90" y="4.60" width="5.3" height="9.40" fill="#005f00"/></svg>
<div style="position:absolute;left:282px;top:216px;width:580px;height:15px;background:#f4f5fd;"></div>
<div style="position:absolute;left:272px;top:216px;width:9px;height:15px;background:linear-gradient(90deg,#e9eefa,#dce5f5);"></div>
<div class="t" style="left:283px;transform-origin:0 0;top:219.53px;font-size:8.4px;color:#0e1834;font-weight:400;transform:scaleX(0.86);">Adv.B737-200</div>
<div class="t" style="right:323.5px;transform-origin:100% 0;top:219.53px;font-size:8.4px;color:#0e1834;font-weight:400;transform:scaleX(0.82);">5</div>
<div class="t" style="right:281px;transform-origin:100% 0;top:219.53px;font-size:8.4px;color:#0e1834;font-weight:400;transform:scaleX(0.82);">0,06</div>
<div class="t" style="right:223.5px;transform-origin:100% 0;top:219.53px;font-size:8.4px;color:#0e1834;font-weight:400;transform:scaleX(0.82);">5</div>
<svg style="position:absolute;left:704px;top:215px" width="158" height="17" viewBox="0 0 158 17"><path d="M2.50 13.50 L144.80 13.50 L155.40 4.10" fill="none" stroke="#2f7f2f" stroke-width="1"/><rect x="150.90" y="4.60" width="5.3" height="9.40" fill="#005f00"/></svg>
<div style="position:absolute;left:282px;top:231px;width:580px;height:15px;background:#fdfaf3;"></div>
<div style="position:absolute;left:272px;top:231px;width:9px;height:15px;background:linear-gradient(90deg,#e9eefa,#dce5f5);"></div>
<div class="t" style="left:283px;transform-origin:0 0;top:234.90px;font-size:8.4px;color:#0e1834;font-weight:400;transform:scaleX(0.86);">Airbus A320-100</div>
<div class="t" style="right:323.5px;transform-origin:100% 0;top:234.90px;font-size:8.4px;color:#0e1834;font-weight:400;transform:scaleX(0.82);">2.720</div>
<div class="t" style="right:281px;transform-origin:100% 0;top:234.90px;font-size:8.4px;color:#0e1834;font-weight:400;transform:scaleX(0.82);">31,46</div>
<div class="t" style="right:223.5px;transform-origin:100% 0;top:234.90px;font-size:8.4px;color:#0e1834;font-weight:400;transform:scaleX(0.82);">2.720</div>
<svg style="position:absolute;left:704px;top:231px" width="158" height="17" viewBox="0 0 158 17"><path d="M2.50 11.28 L17.60 11.28 L28.20 10.15 L38.80 11.28 L49.40 9.77 L60.00 10.34 L70.60 12.31 L81.20 12.50 L91.80 12.50 L102.40 11.56 L113.00 7.42 L123.60 6.67 L134.20 6.20 L144.80 3.10 L155.40 6.58" fill="none" stroke="#2f7f2f" stroke-width="1"/><rect x="2.50" y="11.78" width="5.3" height="1.22" fill="#009c00"/><rect x="13.10" y="11.78" width="5.3" height="1.22" fill="#009c00"/><rect x="23.70" y="10.65" width="5.3" height="2.35" fill="#009c00"/><rect x="34.30" y="11.78" width="5.3" height="1.22" fill="#009c00"/><rect x="44.90" y="10.27" width="5.3" height="2.73" fill="#009c00"/><rect x="55.50" y="10.84" width="5.3" height="2.16" fill="#009c00"/><rect x="66.10" y="12.81" width="5.3" height="0.19" fill="#009c00"/><rect x="97.90" y="12.06" width="5.3" height="0.94" fill="#009c00"/><rect x="108.50" y="7.92" width="5.3" height="5.08" fill="#009c00"/><rect x="119.10" y="7.17" width="5.3" height="5.83" fill="#009c00"/><rect x="129.70" y="6.70" width="5.3" height="6.30" fill="#009c00"/><rect x="140.30" y="3.60" width="5.3" height="9.40" fill="#005f00"/><rect x="150.90" y="7.08" width="5.3" height="5.92" fill="#009c00"/></svg>
<div style="position:absolute;left:282px;top:246px;width:580px;height:16px;background:#f4f5fd;"></div>
<div style="position:absolute;left:272px;top:246px;width:9px;height:16px;background:linear-gradient(90deg,#e9eefa,#dce5f5);"></div>
<div class="t" style="left:283px;transform-origin:0 0;top:250.27px;font-size:8.4px;color:#0e1834;font-weight:400;transform:scaleX(0.86);">Atr 72 [AT7]</div>
<div class="t" style="right:323.5px;transform-origin:100% 0;top:250.27px;font-size:8.4px;color:#0e1834;font-weight:400;transform:scaleX(0.82);">787</div>
<div class="t" style="right:281px;transform-origin:100% 0;top:250.27px;font-size:8.4px;color:#0e1834;font-weight:400;transform:scaleX(0.82);">9,1</div>
<div class="t" style="right:223.5px;transform-origin:100% 0;top:250.27px;font-size:8.4px;color:#0e1834;font-weight:400;transform:scaleX(0.82);">787</div>
<svg style="position:absolute;left:704px;top:246px" width="158" height="17" viewBox="0 0 158 17"><path d="M2.50 13.50 L134.20 13.50 L144.80 4.10 L155.40 9.27" fill="none" stroke="#2f7f2f" stroke-width="1"/><rect x="140.30" y="4.60" width="5.3" height="9.40" fill="#005f00"/><rect x="150.90" y="9.77" width="5.3" height="4.23" fill="#009c00"/></svg>
<div style="position:absolute;left:282px;top:262px;width:580px;height:15px;background:#fdfaf3;"></div>
<div style="position:absolute;left:272px;top:262px;width:9px;height:15px;background:linear-gradient(90deg,#e9eefa,#dce5f5);"></div>
<div class="t" style="left:283px;transform-origin:0 0;top:265.64px;font-size:8.4px;color:#0e1834;font-weight:400;transform:scaleX(0.86);">Atr-42-300 [AT3]</div>
<div class="t" style="right:323.5px;transform-origin:100% 0;top:265.64px;font-size:8.4px;color:#0e1834;font-weight:400;transform:scaleX(0.82);">408</div>
<div class="t" style="right:281px;transform-origin:100% 0;top:265.64px;font-size:8.4px;color:#0e1834;font-weight:400;transform:scaleX(0.82);">4,72</div>
<div class="t" style="right:223.5px;transform-origin:100% 0;top:265.64px;font-size:8.4px;color:#0e1834;font-weight:400;transform:scaleX(0.82);">408</div>
<svg style="position:absolute;left:704px;top:261px" width="158" height="17" viewBox="0 0 158 17"><path d="M2.50 13.50 L38.80 13.50 L49.40 10.21 L60.00 4.85 L70.60 4.10 L81.20 8.99 L91.80 7.58 L102.40 6.83 L113.00 6.26 L123.60 7.58 L134.20 8.99 L144.80 8.42 L155.40 10.21" fill="none" stroke="#2f7f2f" stroke-width="1"/><rect x="44.90" y="10.71" width="5.3" height="3.29" fill="#009c00"/><rect x="55.50" y="5.35" width="5.3" height="8.65" fill="#009c00"/><rect x="66.10" y="4.60" width="5.3" height="9.40" fill="#005f00"/><rect x="76.70" y="9.49" width="5.3" height="4.51" fill="#009c00"/><rect x="87.30" y="8.08" width="5.3" height="5.92" fill="#009c00"/><rect x="97.90" y="7.33" width="5.3" height="6.67" fill="#009c00"/><rect x="108.50" y="6.76" width="5.3" height="7.24" fill="#009c00"/><rect x="119.10" y="8.08" width="5.3" height="5.92" fill="#009c00"/><rect x="129.70" y="9.49" width="5.3" height="4.51" fill="#009c00"/><rect x="140.30" y="8.92" width="5.3" height="5.08" fill="#009c00"/><rect x="150.90" y="10.71" width="5.3" height="3.29" fill="#009c00"/></svg>
<div style="position:absolute;left:282px;top:277px;width:580px;height:16px;background:#f4f5fd;"></div>
<div style="position:absolute;left:272px;top:277px;width:9px;height:16px;background:linear-gradient(90deg,#e9eefa,#dce5f5);"></div>
<div class="t" style="left:283px;transform-origin:0 0;top:281.01px;font-size:8.4px;color:#0e1834;font-weight:400;transform:scaleX(0.86);">Atr-42-500 [AT5]</div>
<div class="t" style="right:323.5px;transform-origin:100% 0;top:281.01px;font-size:8.4px;color:#0e1834;font-weight:400;transform:scaleX(0.82);">158</div>
<div class="t" style="right:281px;transform-origin:100% 0;top:281.01px;font-size:8.4px;color:#0e1834;font-weight:400;transform:scaleX(0.82);">1,83</div>
<div class="t" style="right:223.5px;transform-origin:100% 0;top:281.01px;font-size:8.4px;color:#0e1834;font-weight:400;transform:scaleX(0.82);">158</div>
<svg style="position:absolute;left:704px;top:277px" width="158" height="17" viewBox="0 0 158 17"><path d="M2.50 12.50 L7.00 12.50 L17.60 10.24 L28.20 3.10 L38.80 6.86 L49.40 9.68 L60.00 8.93 L70.60 12.31 L81.20 12.50 L91.80 11.18 L102.40 12.03 L113.00 12.31 L123.60 11.18 L134.20 9.68 L144.80 10.24 L155.40 12.31" fill="none" stroke="#2f7f2f" stroke-width="1"/><rect x="13.10" y="10.74" width="5.3" height="2.26" fill="#009c00"/><rect x="23.70" y="3.60" width="5.3" height="9.40" fill="#005f00"/><rect x="34.30" y="7.36" width="5.3" height="5.64" fill="#009c00"/><rect x="44.90" y="10.18" width="5.3" height="2.82" fill="#009c00"/><rect x="55.50" y="9.43" width="5.3" height="3.57" fill="#009c00"/><rect x="66.10" y="12.81" width="5.3" height="0.19" fill="#009c00"/><rect x="87.30" y="11.68" width="5.3" height="1.32" fill="#009c00"/><rect x="97.90" y="12.53" width="5.3" height="0.47" fill="#009c00"/><rect x="108.50" y="12.81" width="5.3" height="0.19" fill="#009c00"/><rect x="119.10" y="11.68" width="5.3" height="1.32" fill="#009c00"/><rect x="129.70" y="10.18" width="5.3" height="2.82" fill="#009c00"/><rect x="140.30" y="10.74" width="5.3" height="2.26" fill="#009c00"/><rect x="150.90" y="12.81" width="5.3" height="0.19" fill="#009c00"/></svg>
<div style="position:absolute;left:282px;top:293px;width:580px;height:15px;background:#fdfaf3;"></div>
<div style="position:absolute;left:272px;top:293px;width:9px;height:15px;background:linear-gradient(90deg,#e9eefa,#dce5f5);"></div>
<div class="t" style="left:283px;transform-origin:0 0;top:296.38px;font-size:8.4px;color:#0e1834;font-weight:400;transform:scaleX(0.86);">Boeing 737-300 [733]</div>
<div class="t" style="right:323.5px;transform-origin:100% 0;top:296.38px;font-size:8.4px;color:#0e1834;font-weight:400;transform:scaleX(0.82);">651</div>
<div class="t" style="right:281px;transform-origin:100% 0;top:296.38px;font-size:8.4px;color:#0e1834;font-weight:400;transform:scaleX(0.82);">7,53</div>
<div class="t" style="right:223.5px;transform-origin:100% 0;top:296.38px;font-size:8.4px;color:#0e1834;font-weight:400;transform:scaleX(0.82);">651</div>
<svg style="position:absolute;left:704px;top:292px" width="158" height="17" viewBox="0 0 158 17"><path d="M2.50 13.50 L49.40 13.50 L60.00 13.31 L70.60 11.71 L81.20 10.77 L91.80 8.99 L102.40 7.20 L113.00 4.48 L123.60 4.10 L134.20 4.48 L144.80 6.45 L155.40 10.77" fill="none" stroke="#2f7f2f" stroke-width="1"/><rect x="55.50" y="13.81" width="5.3" height="0.19" fill="#009c00"/><rect x="66.10" y="12.21" width="5.3" height="1.79" fill="#009c00"/><rect x="76.70" y="11.27" width="5.3" height="2.73" fill="#009c00"/><rect x="87.30" y="9.49" width="5.3" height="4.51" fill="#009c00"/><rect x="97.90" y="7.70" width="5.3" height="6.30" fill="#009c00"/><rect x="108.50" y="4.98" width="5.3" height="9.02" fill="#009c00"/><rect x="119.10" y="4.60" width="5.3" height="9.40" fill="#005f00"/><rect x="129.70" y="4.98" width="5.3" height="9.02" fill="#009c00"/><rect x="140.30" y="6.95" width="5.3" height="7.05" fill="#009c00"/><rect x="150.90" y="11.27" width="5.3" height="2.73" fill="#009c00"/></svg>
<div style="position:absolute;left:282px;top:308px;width:580px;height:15px;background:#f4f5fd;"></div>
<div style="position:absolute;left:272px;top:308px;width:9px;height:15px;background:linear-gradient(90deg,#e9eefa,#dce5f5);"></div>
<div class="t" style="left:283px;transform-origin:0 0;top:311.75px;font-size:8.4px;color:#0e1834;font-weight:400;transform:scaleX(0.86);">Boeing 737-700 [73G]</div>
<div class="t" style="right:323.5px;transform-origin:100% 0;top:311.75px;font-size:8.4px;color:#0e1834;font-weight:400;transform:scaleX(0.82);">937</div>
<div class="t" style="right:281px;transform-origin:100% 0;top:311.75px;font-size:8.4px;color:#0e1834;font-weight:400;transform:scaleX(0.82);">10,84</div>
<div class="t" style="right:223.5px;transform-origin:100% 0;top:311.75px;font-size:8.4px;color:#0e1834;font-weight:400;transform:scaleX(0.82);">937</div>
<svg style="position:absolute;left:704px;top:307px" width="158" height="17" viewBox="0 0 158 17"><path d="M2.50 13.50 L28.20 13.50 L38.80 12.94 L49.40 11.71 L60.00 10.21 L70.60 8.05 L81.20 9.36 L91.80 7.20 L102.40 5.32 L113.00 5.70 L123.60 4.10 L134.20 5.32 L144.80 7.20 L155.40 10.40" fill="none" stroke="#2f7f2f" stroke-width="1"/><rect x="34.30" y="13.44" width="5.3" height="0.56" fill="#009c00"/><rect x="44.90" y="12.21" width="5.3" height="1.79" fill="#009c00"/><rect x="55.50" y="10.71" width="5.3" height="3.29" fill="#009c00"/><rect x="66.10" y="8.55" width="5.3" height="5.45" fill="#009c00"/><rect x="76.70" y="9.86" width="5.3" height="4.14" fill="#009c00"/><rect x="87.30" y="7.70" width="5.3" height="6.30" fill="#009c00"/><rect x="97.90" y="5.82" width="5.3" height="8.18" fill="#009c00"/><rect x="108.50" y="6.20" width="5.3" height="7.80" fill="#009c00"/><rect x="119.10" y="4.60" width="5.3" height="9.40" fill="#005f00"/><rect x="129.70" y="5.82" width="5.3" height="8.18" fill="#009c00"/><rect x="140.30" y="7.70" width="5.3" height="6.30" fill="#009c00"/><rect x="150.90" y="10.90" width="5.3" height="3.10" fill="#009c00"/></svg>
<div style="position:absolute;left:282px;top:323px;width:580px;height:16px;background:#fdfaf3;"></div>
<div style="position:absolute;left:272px;top:323px;width:9px;height:16px;background:linear-gradient(90deg,#e9eefa,#dce5f5);"></div>
<div class="t" style="left:283px;transform-origin:0 0;top:327.12px;font-size:8.4px;color:#0e1834;font-weight:400;transform:scaleX(0.86);">Boeing 737-800</div>
<div class="t" style="right:323.5px;transform-origin:100% 0;top:327.12px;font-size:8.4px;color:#0e1834;font-weight:400;transform:scaleX(0.82);">171</div>
<div class="t" style="right:281px;transform-origin:100% 0;top:327.12px;font-size:8.4px;color:#0e1834;font-weight:400;transform:scaleX(0.82);">1,98</div>
<div class="t" style="right:223.5px;transform-origin:100% 0;top:327.12px;font-size:8.4px;color:#0e1834;font-weight:400;transform:scaleX(0.82);">171</div>
<svg style="position:absolute;left:704px;top:323px" width="158" height="17" viewBox="0 0 158 17"><path d="M2.50 13.50 L81.20 13.50 L91.80 13.03 L102.40 12.37 L113.00 7.01 L123.60 7.95 L134.20 8.33 L144.80 4.10 L155.40 10.59" fill="none" stroke="#2f7f2f" stroke-width="1"/><rect x="87.30" y="13.53" width="5.3" height="0.47" fill="#009c00"/><rect x="97.90" y="12.87" width="5.3" height="1.13" fill="#009c00"/><rect x="108.50" y="7.51" width="5.3" height="6.49" fill="#009c00"/><rect x="119.10" y="8.45" width="5.3" height="5.55" fill="#009c00"/><rect x="129.70" y="8.83" width="5.3" height="5.17" fill="#009c00"/><rect x="140.30" y="4.60" width="5.3" height="9.40" fill="#005f00"/><rect x="150.90" y="11.09" width="5.3" height="2.91" fill="#009c00"/></svg>
<div style="position:absolute;left:282px;top:339px;width:580px;height:15px;background:#f4f5fd;"></div>
<div style="position:absolute;left:272px;top:339px;width:9px;height:15px;background:linear-gradient(90deg,#e9eefa,#dce5f5);"></div>
<div class="t" style="left:283px;transform-origin:0 0;top:342.49px;font-size:8.4px;color:#0e1834;font-weight:400;transform:scaleX(0.86);">DC9-32</div>
<div class="t" style="right:323.5px;transform-origin:100% 0;top:342.49px;font-size:8.4px;color:#0e1834;font-weight:400;transform:scaleX(0.82);">295</div>
<div class="t" style="right:281px;transform-origin:100% 0;top:342.49px;font-size:8.4px;color:#0e1834;font-weight:400;transform:scaleX(0.82);">3,41</div>
<div class="t" style="right:223.5px;transform-origin:100% 0;top:342.49px;font-size:8.4px;color:#0e1834;font-weight:400;transform:scaleX(0.82);">295</div>
<svg style="position:absolute;left:704px;top:338px" width="158" height="17" viewBox="0 0 158 17"><path d="M2.50 13.50 L144.80 13.50 L155.40 4.10" fill="none" stroke="#2f7f2f" stroke-width="1"/><rect x="150.90" y="4.60" width="5.3" height="9.40" fill="#005f00"/></svg>
<div style="position:absolute;left:282px;top:354px;width:580px;height:15px;background:#fdfaf3;"></div>
<div style="position:absolute;left:272px;top:354px;width:9px;height:15px;background:linear-gradient(90deg,#e9eefa,#dce5f5);"></div>
<div class="t" style="left:283px;transform-origin:0 0;top:357.86px;font-size:8.4px;color:#0e1834;font-weight:400;transform:scaleX(0.86);">Dornier 228 [D28]</div>
<div class="t" style="right:323.5px;transform-origin:100% 0;top:357.86px;font-size:8.4px;color:#0e1834;font-weight:400;transform:scaleX(0.82);">731</div>
<div class="t" style="right:281px;transform-origin:100% 0;top:357.86px;font-size:8.4px;color:#0e1834;font-weight:400;transform:scaleX(0.82);">8,45</div>
<div class="t" style="right:223.5px;transform-origin:100% 0;top:357.86px;font-size:8.4px;color:#0e1834;font-weight:400;transform:scaleX(0.82);">731</div>
<svg style="position:absolute;left:704px;top:354px" width="158" height="17" viewBox="0 0 158 17"><path d="M2.50 12.50 L102.40 12.50 L113.00 7.05 L123.60 3.48 L134.20 3.48 L144.80 3.10 L155.40 8.55" fill="none" stroke="#2f7f2f" stroke-width="1"/><rect x="108.50" y="7.55" width="5.3" height="5.45" fill="#009c00"/><rect x="119.10" y="3.98" width="5.3" height="9.02" fill="#009c00"/><rect x="129.70" y="3.98" width="5.3" height="9.02" fill="#009c00"/><rect x="140.30" y="3.60" width="5.3" height="9.40" fill="#005f00"/><rect x="150.90" y="9.05" width="5.3" height="3.95" fill="#009c00"/></svg>
<div style="position:absolute;left:282px;top:369px;width:580px;height:16px;background:#f4f5fd;"></div>
<div style="position:absolute;left:272px;top:369px;width:9px;height:16px;background:linear-gradient(90deg,#e9eefa,#dce5f5);"></div>
<div class="t" style="left:283px;transform-origin:0 0;top:373.23px;font-size:8.4px;color:#0e1834;font-weight:400;transform:scaleX(0.86);">Embraer E190 [E190]</div>
<div class="t" style="right:323.5px;transform-origin:100% 0;top:373.23px;font-size:8.4px;color:#0e1834;font-weight:400;transform:scaleX(0.82);">674</div>
<div class="t" style="right:281px;transform-origin:100% 0;top:373.23px;font-size:8.4px;color:#0e1834;font-weight:400;transform:scaleX(0.82);">7,79</div>
<div class="t" style="right:223.5px;transform-origin:100% 0;top:373.23px;font-size:8.4px;color:#0e1834;font-weight:400;transform:scaleX(0.82);">674</div>
<svg style="position:absolute;left:704px;top:369px" width="158" height="17" viewBox="0 0 158 17"><path d="M2.50 13.50 L70.60 13.50 L81.20 8.24 L91.80 8.80 L102.40 11.06 L113.00 11.62 L123.60 11.62 L134.20 10.12 L144.80 4.10 L155.40 9.36" fill="none" stroke="#2f7f2f" stroke-width="1"/><rect x="76.70" y="8.74" width="5.3" height="5.26" fill="#009c00"/><rect x="87.30" y="9.30" width="5.3" height="4.70" fill="#009c00"/><rect x="97.90" y="11.56" width="5.3" height="2.44" fill="#009c00"/><rect x="108.50" y="12.12" width="5.3" height="1.88" fill="#009c00"/><rect x="119.10" y="12.12" width="5.3" height="1.88" fill="#009c00"/><rect x="129.70" y="10.62" width="5.3" height="3.38" fill="#009c00"/><rect x="140.30" y="4.60" width="5.3" height="9.40" fill="#005f00"/><rect x="150.90" y="9.86" width="5.3" height="4.14" fill="#009c00"/></svg>
<div style="position:absolute;left:282px;top:385px;width:580px;height:15px;background:#fdfaf3;"></div>
<div style="position:absolute;left:272px;top:385px;width:9px;height:15px;background:linear-gradient(90deg,#e9eefa,#dce5f5);"></div>
<div class="t" style="left:283px;transform-origin:0 0;top:388.60px;font-size:8.4px;color:#0e1834;font-weight:400;transform:scaleX(0.86);">Embraer Emb.145 Amazon [ER4]</div>
<div class="t" style="right:323.5px;transform-origin:100% 0;top:388.60px;font-size:8.4px;color:#0e1834;font-weight:400;transform:scaleX(0.82);">277</div>
<div class="t" style="right:281px;transform-origin:100% 0;top:388.60px;font-size:8.4px;color:#0e1834;font-weight:400;transform:scaleX(0.82);">3,2</div>
<div class="t" style="right:223.5px;transform-origin:100% 0;top:388.60px;font-size:8.4px;color:#0e1834;font-weight:400;transform:scaleX(0.82);">277</div>
<svg style="position:absolute;left:704px;top:384px" width="158" height="17" viewBox="0 0 158 17"><path d="M2.50 13.50 L7.00 13.50 L17.60 13.31 L28.20 11.62 L38.80 12.00 L49.40 11.62 L60.00 10.21 L70.60 4.66 L81.20 7.39 L91.80 6.45 L102.40 6.45 L113.00 5.23 L123.60 4.10 L134.20 6.45 L144.80 11.62 L155.40 12.56" fill="none" stroke="#2f7f2f" stroke-width="1"/><rect x="13.10" y="13.81" width="5.3" height="0.19" fill="#009c00"/><rect x="23.70" y="12.12" width="5.3" height="1.88" fill="#009c00"/><rect x="34.30" y="12.50" width="5.3" height="1.50" fill="#009c00"/><rect x="44.90" y="12.12" width="5.3" height="1.88" fill="#009c00"/><rect x="55.50" y="10.71" width="5.3" height="3.29" fill="#009c00"/><rect x="66.10" y="5.16" width="5.3" height="8.84" fill="#009c00"/><rect x="76.70" y="7.89" width="5.3" height="6.11" fill="#009c00"/><rect x="87.30" y="6.95" width="5.3" height="7.05" fill="#009c00"/><rect x="97.90" y="6.95" width="5.3" height="7.05" fill="#009c00"/><rect x="108.50" y="5.73" width="5.3" height="8.27" fill="#009c00"/><rect x="119.10" y="4.60" width="5.3" height="9.40" fill="#005f00"/><rect x="129.70" y="6.95" width="5.3" height="7.05" fill="#009c00"/><rect x="140.30" y="12.12" width="5.3" height="1.88" fill="#009c00"/><rect x="150.90" y="13.06" width="5.3" height="0.94" fill="#009c00"/></svg>
<div style="position:absolute;left:282px;top:400px;width:580px;height:16px;background:#f4f5fd;"></div>
<div style="position:absolute;left:272px;top:400px;width:9px;height:16px;background:linear-gradient(90deg,#e9eefa,#dce5f5);"></div>
<div class="t" style="left:283px;transform-origin:0 0;top:403.97px;font-size:8.4px;color:#0e1834;font-weight:400;transform:scaleX(0.86);">Embraer Erj-170 [E170]</div>
<div class="t" style="right:323.5px;transform-origin:100% 0;top:403.97px;font-size:8.4px;color:#0e1834;font-weight:400;transform:scaleX(0.82);">131</div>
<div class="t" style="right:281px;transform-origin:100% 0;top:403.97px;font-size:8.4px;color:#0e1834;font-weight:400;transform:scaleX(0.82);">1,51</div>
<div class="t" style="right:223.5px;transform-origin:100% 0;top:403.97px;font-size:8.4px;color:#0e1834;font-weight:400;transform:scaleX(0.82);">131</div>
<svg style="position:absolute;left:704px;top:400px" width="158" height="17" viewBox="0 0 158 17"><path d="M2.50 12.50 L123.60 12.50 L134.20 7.99 L144.80 3.10 L155.40 8.55" fill="none" stroke="#2f7f2f" stroke-width="1"/><rect x="129.70" y="8.49" width="5.3" height="4.51" fill="#009c00"/><rect x="140.30" y="3.60" width="5.3" height="9.40" fill="#005f00"/><rect x="150.90" y="9.05" width="5.3" height="3.95" fill="#009c00"/></svg>
<div style="position:absolute;left:282px;top:416px;width:580px;height:15px;background:#fdfaf3;"></div>
<div style="position:absolute;left:272px;top:416px;width:9px;height:15px;background:linear-gradient(90deg,#e9eefa,#dce5f5);"></div>
<div class="t" style="left:283px;transform-origin:0 0;top:419.34px;font-size:8.4px;color:#0e1834;font-weight:400;transform:scaleX(0.86);">Fokker F27 Mk500 Friendship [F27]</div>
<div class="t" style="right:323.5px;transform-origin:100% 0;top:419.34px;font-size:8.4px;color:#0e1834;font-weight:400;transform:scaleX(0.82);">1</div>
<div class="t" style="right:281px;transform-origin:100% 0;top:419.34px;font-size:8.4px;color:#0e1834;font-weight:400;transform:scaleX(0.82);">0,01</div>
<div class="t" style="right:223.5px;transform-origin:100% 0;top:419.34px;font-size:8.4px;color:#0e1834;font-weight:400;transform:scaleX(0.82);">1</div>
<svg style="position:absolute;left:704px;top:415px" width="158" height="17" viewBox="0 0 158 17"><path d="M2.50 13.50 L144.80 13.50 L155.40 4.10" fill="none" stroke="#2f7f2f" stroke-width="1"/><rect x="150.90" y="4.60" width="5.3" height="9.40" fill="#005f00"/></svg>
<div style="position:absolute;left:282px;top:431px;width:580px;height:15px;background:#f4f5fd;"></div>
<div style="position:absolute;left:272px;top:431px;width:9px;height:15px;background:linear-gradient(90deg,#e9eefa,#dce5f5);"></div>
<div class="t" style="left:283px;transform-origin:0 0;top:434.71px;font-size:8.4px;color:#0e1834;font-weight:400;transform:scaleX(0.86);">Merlin Metro Iii [SW3]</div>
<div class="t" style="right:323.5px;transform-origin:100% 0;top:434.71px;font-size:8.4px;color:#0e1834;font-weight:400;transform:scaleX(0.82);">59</div>
<div class="t" style="right:281px;transform-origin:100% 0;top:434.71px;font-size:8.4px;color:#0e1834;font-weight:400;transform:scaleX(0.82);">0,68</div>
<div class="t" style="right:223.5px;transform-origin:100% 0;top:434.71px;font-size:8.4px;color:#0e1834;font-weight:400;transform:scaleX(0.82);">59</div>
<svg style="position:absolute;left:704px;top:430px" width="158" height="17" viewBox="0 0 158 17"><path d="M2.50 13.50 L49.40 13.50 L60.00 12.56 L70.60 9.27 L81.20 8.33 L91.80 6.45 L102.40 9.27 L113.00 7.86 L123.60 4.10 L134.20 6.45 L144.80 8.33 L155.40 13.31" fill="none" stroke="#2f7f2f" stroke-width="1"/><rect x="55.50" y="13.06" width="5.3" height="0.94" fill="#009c00"/><rect x="66.10" y="9.77" width="5.3" height="4.23" fill="#009c00"/><rect x="76.70" y="8.83" width="5.3" height="5.17" fill="#009c00"/><rect x="87.30" y="6.95" width="5.3" height="7.05" fill="#009c00"/><rect x="97.90" y="9.77" width="5.3" height="4.23" fill="#009c00"/><rect x="108.50" y="8.36" width="5.3" height="5.64" fill="#009c00"/><rect x="119.10" y="4.60" width="5.3" height="9.40" fill="#005f00"/><rect x="129.70" y="6.95" width="5.3" height="7.05" fill="#009c00"/><rect x="140.30" y="8.83" width="5.3" height="5.17" fill="#009c00"/><rect x="150.90" y="13.81" width="5.3" height="0.19" fill="#009c00"/></svg>
<div style="position:absolute;left:282px;top:446px;width:580px;height:16px;background:#fdfaf3;"></div>
<div style="position:absolute;left:272px;top:446px;width:9px;height:16px;background:linear-gradient(90deg,#e9eefa,#dce5f5);"></div>
<div class="t" style="left:283px;transform-origin:0 0;top:450.08px;font-size:8.4px;color:#0e1834;font-weight:400;transform:scaleX(0.86);">Regional Jet Crj-900 Canadair [CRJ9]</div>
<div class="t" style="right:323.5px;transform-origin:100% 0;top:450.08px;font-size:8.4px;color:#0e1834;font-weight:400;transform:scaleX(0.82);">129</div>
<div class="t" style="right:281px;transform-origin:100% 0;top:450.08px;font-size:8.4px;color:#0e1834;font-weight:400;transform:scaleX(0.82);">1,49</div>
<div class="t" style="right:223.5px;transform-origin:100% 0;top:450.08px;font-size:8.4px;color:#0e1834;font-weight:400;transform:scaleX(0.82);">129</div>
<svg style="position:absolute;left:704px;top:446px" width="158" height="17" viewBox="0 0 158 17"><path d="M2.50 12.50 L144.80 12.50 L155.40 3.10" fill="none" stroke="#2f7f2f" stroke-width="1"/><rect x="150.90" y="3.60" width="5.3" height="9.40" fill="#005f00"/></svg>
<div style="position:absolute;left:282px;top:462px;width:580px;height:15px;background:#f4f5fd;"></div>
<div style="position:absolute;left:272px;top:462px;width:9px;height:15px;background:linear-gradient(90deg,#e9eefa,#dce5f5);"></div>
<div class="t" style="left:283px;transform-origin:0 0;top:465.45px;font-size:8.4px;color:#0e1834;font-weight:400;transform:scaleX(0.86);">Superjet 100-95 Sukhoi [SU9]</div>
<div class="t" style="right:323.5px;transform-origin:100% 0;top:465.45px;font-size:8.4px;color:#0e1834;font-weight:400;transform:scaleX(0.82);">442</div>
<div class="t" style="right:281px;transform-origin:100% 0;top:465.45px;font-size:8.4px;color:#0e1834;font-weight:400;transform:scaleX(0.82);">5,11</div>
<div class="t" style="right:223.5px;transform-origin:100% 0;top:465.45px;font-size:8.4px;color:#0e1834;font-weight:400;transform:scaleX(0.82);">442</div>
<svg style="position:absolute;left:704px;top:461px" width="158" height="17" viewBox="0 0 158 17"><path d="M2.50 13.50 L144.80 13.50 L155.40 4.10" fill="none" stroke="#2f7f2f" stroke-width="1"/><rect x="150.90" y="4.60" width="5.3" height="9.40" fill="#005f00"/></svg>
<div style="position:absolute;left:272px;top:200px;width:9px;height:1px;background:#9fb4d4;"></div>
<div style="position:absolute;left:282px;top:200px;width:580px;height:1px;background:#c4c4c8;"></div>
<div style="position:absolute;left:272px;top:216px;width:9px;height:1px;background:#9fb4d4;"></div>
<div style="position:absolute;left:282px;top:216px;width:580px;height:1px;background:#c4c4c8;"></div>
<div style="position:absolute;left:272px;top:231px;width:9px;height:1px;background:#9fb4d4;"></div>
<div style="position:absolute;left:282px;top:231px;width:580px;height:1px;background:#c4c4c8;"></div>
<div style="position:absolute;left:272px;top:246px;width:9px;height:1px;background:#9fb4d4;"></div>
<div style="position:absolute;left:282px;top:246px;width:580px;height:1px;background:#c4c4c8;"></div>
<div style="position:absolute;left:272px;top:262px;width:9px;height:1px;background:#9fb4d4;"></div>
<div style="position:absolute;left:282px;top:262px;width:580px;height:1px;background:#c4c4c8;"></div>
<div style="position:absolute;left:272px;top:277px;width:9px;height:1px;background:#9fb4d4;"></div>
<div style="position:absolute;left:282px;top:277px;width:580px;height:1px;background:#c4c4c8;"></div>
<div style="position:absolute;left:272px;top:293px;width:9px;height:1px;background:#9fb4d4;"></div>
<div style="position:absolute;left:282px;top:293px;width:580px;height:1px;background:#c4c4c8;"></div>
<div style="position:absolute;left:272px;top:308px;width:9px;height:1px;background:#9fb4d4;"></div>
<div style="position:absolute;left:282px;top:308px;width:580px;height:1px;background:#c4c4c8;"></div>
<div style="position:absolute;left:272px;top:323px;width:9px;height:1px;background:#9fb4d4;"></div>
<div style="position:absolute;left:282px;top:323px;width:580px;height:1px;background:#c4c4c8;"></div>
<div style="position:absolute;left:272px;top:339px;width:9px;height:1px;background:#9fb4d4;"></div>
<div style="position:absolute;left:282px;top:339px;width:580px;height:1px;background:#c4c4c8;"></div>
<div style="position:absolute;left:272px;top:354px;width:9px;height:1px;background:#9fb4d4;"></div>
<div style="position:absolute;left:282px;top:354px;width:580px;height:1px;background:#c4c4c8;"></div>
<div style="position:absolute;left:272px;top:369px;width:9px;height:1px;background:#9fb4d4;"></div>
<div style="position:absolute;left:282px;top:369px;width:580px;height:1px;background:#c4c4c8;"></div>
<div style="position:absolute;left:272px;top:385px;width:9px;height:1px;background:#9fb4d4;"></div>
<div style="position:absolute;left:282px;top:385px;width:580px;height:1px;background:#c4c4c8;"></div>
<div style="position:absolute;left:272px;top:400px;width:9px;height:1px;background:#9fb4d4;"></div>
<div style="position:absolute;left:282px;top:400px;width:580px;height:1px;background:#c4c4c8;"></div>
<div style="position:absolute;left:272px;top:416px;width:9px;height:1px;background:#9fb4d4;"></div>
<div style="position:absolute;left:282px;top:416px;width:580px;height:1px;background:#c4c4c8;"></div>
<div style="position:absolute;left:272px;top:431px;width:9px;height:1px;background:#9fb4d4;"></div>
<div style="position:absolute;left:282px;top:431px;width:580px;height:1px;background:#c4c4c8;"></div>
<div style="position:absolute;left:272px;top:446px;width:9px;height:1px;background:#9fb4d4;"></div>
<div style="position:absolute;left:282px;top:446px;width:580px;height:1px;background:#c4c4c8;"></div>
<div style="position:absolute;left:272px;top:462px;width:9px;height:1px;background:#9fb4d4;"></div>
<div style="position:absolute;left:282px;top:462px;width:580px;height:1px;background:#c4c4c8;"></div>
<div style="position:absolute;left:272px;top:477px;width:9px;height:1px;background:#9fb4d4;"></div>
<div style="position:absolute;left:282px;top:477px;width:580px;height:1px;background:#c4c4c8;"></div>
<div style="position:absolute;left:493px;top:185px;width:1px;height:292px;background:#b8b8bc;"></div>
<div style="position:absolute;left:551px;top:185px;width:1px;height:292px;background:#b8b8bc;"></div>
<div style="position:absolute;left:593px;top:185px;width:1px;height:292px;background:#b8b8bc;"></div>
<div style="position:absolute;left:651px;top:185px;width:1px;height:292px;background:#b8b8bc;"></div>
<div style="position:absolute;left:704px;top:185px;width:1px;height:292px;background:#b8b8bc;"></div>
<div style="position:absolute;left:272px;top:185px;width:590px;height:1px;background:#2c3444;"></div>
<div style="position:absolute;left:281px;top:200px;width:581px;height:1px;background:#58585c;"></div>
<div style="position:absolute;left:281px;top:185px;width:1px;height:16px;background:#303034;"></div>
<div style="position:absolute;left:861px;top:185px;width:1px;height:16px;background:#303034;"></div>
<div style="position:absolute;left:282px;top:186px;width:579px;height:1px;background:rgba(255,255,255,0.75);"></div>
<svg width="6" height="7" style="position:absolute;left:274.5px;top:188.5px"><path d="M1 0.5 L4.2 3.5 L1 6.5 Z" fill="#111"/></svg>
<div class="t" style="left:276px;transform-origin:0 0;top:496.39px;font-size:8.4px;color:#2a3050;font-weight:400;transform:scaleX(0.82);">1 de 19</div>
</body></html>
